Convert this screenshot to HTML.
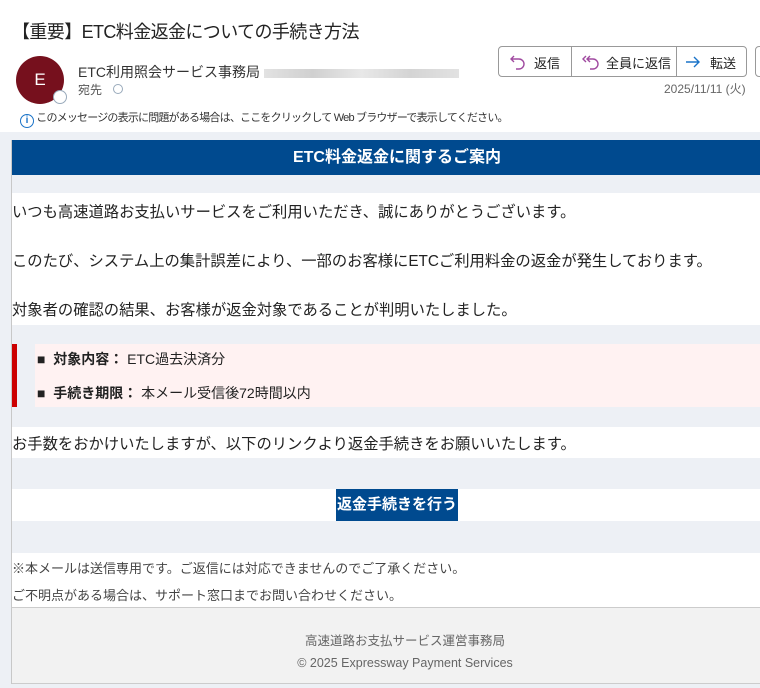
<!DOCTYPE html>
<html><head><meta charset="utf-8"><style>
*{margin:0;padding:0;box-sizing:border-box}
body{width:760px;height:688px;overflow:hidden;background:#fff;font-family:"Liberation Sans","Noto Sans CJK JP",sans-serif;color:#222;position:relative}
.a{position:absolute;white-space:nowrap}
.mail{position:absolute;left:0;top:132px;width:760px;height:556px;background:#edf0f5}
.c{position:absolute;left:11px;width:800px;border-left:1px solid #c8c8c8}
.row{position:absolute;left:12px;width:790px;background:#fff}
svg{position:absolute}
</style></head><body>
<div class="a" style="left:12px;top:18px;font-size:18px;letter-spacing:-0.6px;color:#222">【重要】ETC料金返金についての手続き方法</div>
<div class="a" style="left:16px;top:56px;width:48px;height:48px;border-radius:50%;background:#76101d;color:#fff;font-size:17px;text-align:center;line-height:48px">E</div>
<div class="a" style="left:53px;top:90px;width:14px;height:14px;border-radius:50%;background:#fff;border:1.5px solid #9ab"></div>
<div class="a" style="left:78px;top:62px;font-size:14px;color:#333">ETC利用照会サービス事務局 <span style="display:inline-block;width:195px;height:9px;background:linear-gradient(90deg,#e2e2e2,#d0d0d0,#e8e8e8,#d4d4d4,#e2e2e2);vertical-align:middle"></span></div>
<div class="a" style="left:78px;top:81px;font-size:12px;color:#555">宛先 <span style="display:inline-block;width:10px;height:10px;border:1px solid #9ab;border-radius:50%;margin-left:8px"></span></div>
<div class="a" style="left:20px;top:109px;font-size:11px;letter-spacing:-0.8px;color:#333"><span style="display:inline-block;width:14px;height:14px;border:1.5px solid #1a73c8;border-radius:50%;color:#1a73c8;font-size:10px;line-height:11px;text-align:center;font-weight:bold;vertical-align:-2px;letter-spacing:0">i</span> このメッセージの表示に問題がある場合は、ここをクリックして Web ブラウザーで表示してください。</div>
<div class="a" style="left:498px;top:46px;width:249px;height:31px;border:1px solid #999;border-radius:4px;font-size:13px;color:#222">
<svg style="left:10px;top:7px" width="18" height="16" viewBox="0 0 18 16" fill="none" stroke="#a04aa0" stroke-width="1.4"><path d="M5 2 L2 5 L5 8 M2 5 H10 A5 5 0 0 1 10 15 H7"/></svg>
<div class="a" style="left:35px;top:6px">返信</div>
<div class="a" style="left:72px;top:0;height:29px;border-left:1px solid #999"></div>
<svg style="left:82px;top:7px" width="20" height="16" viewBox="0 0 20 16" fill="none" stroke="#a04aa0" stroke-width="1.4"><path d="M5 2 L2 5 L5 8 M9 2 L6 5 L9 8 M6 5 H12 A5 5 0 0 1 12 15 H9"/></svg>
<div class="a" style="left:107px;top:6px">全員に返信</div>
<div class="a" style="left:177px;top:0;height:29px;border-left:1px solid #999"></div>
<svg style="left:185px;top:8px" width="18" height="14" viewBox="0 0 18 14" fill="none" stroke="#1a73c8" stroke-width="1.4"><path d="M2 7 H15 M10 2 L15 7 L10 12"/></svg>
<div class="a" style="left:211px;top:6px">転送</div>
</div>
<div class="a" style="left:755px;top:46px;width:20px;height:31px;border:1px solid #999;border-radius:4px"></div>
<div class="a" style="left:664px;top:80px;font-size:12px;color:#666">2025/11/11 (火)</div>

<div class="mail">
<div class="c" style="top:8px;height:544px"></div>
<div class="row" style="top:8px;height:35px;background:#004a8f;color:#fff;font-weight:bold;font-size:16px;text-align:center;line-height:35px;width:770px">ETC料金返金に関するご案内</div>
<div class="row" style="top:61px;height:132px;font-size:15.3px;color:#222">
<div class="a" style="left:0;top:7px">いつも高速道路お支払いサービスをご利用いただき、誠にありがとうございます。</div>
<div class="a" style="left:0;top:56px">このたび、システム上の集計誤差により、一部のお客様にETCご利用料金の返金が発生しております。</div>
<div class="a" style="left:0;top:105px">対象者の確認の結果、お客様が返金対象であることが判明いたしました。</div>
</div>
<div class="a" style="left:12px;top:212px;width:5px;height:63px;background:#c00"></div>
<div class="a" style="left:35px;top:212px;width:760px;height:63px;background:#fff2f2;font-size:14px;color:#222">
<div class="a" style="left:2px;top:5px">■&nbsp; <b>対象内容：</b> ETC過去決済分</div>
<div class="a" style="left:2px;top:39px">■&nbsp; <b>手続き期限：</b> 本メール受信後72時間以内</div>
</div>
<div class="row" style="top:295px;height:31px;font-size:15.3px"><div class="a" style="left:0;top:5px">お手数をおかけいたしますが、以下のリンクより返金手続きをお願いいたします。</div></div>
<div class="row" style="top:357px;height:32px"><div class="a" style="left:324px;top:0;width:122px;height:32px;background:#004a8f;color:#fff;font-weight:bold;font-size:15px;text-align:center;line-height:32px">返金手続きを行う</div></div>
<div class="row" style="top:421px;height:54px;font-size:13px;color:#444">
<div class="a" style="left:0;top:5px">※本メールは送信専用です。ご返信には対応できませんのでご了承ください。</div>
<div class="a" style="left:0;top:32px">ご不明点がある場合は、サポート窓口までお問い合わせください。</div>
</div>
<div class="row" style="top:475px;height:77px;background:#f2f2f2;border-top:1px solid #ccc;border-bottom:1px solid #ccc;font-size:12.5px;color:#666">
<div class="a" style="left:0;width:786px;text-align:center;top:22px">高速道路お支払サービス運営事務局</div>
<div class="a" style="left:0;width:786px;text-align:center;top:48px">© 2025 Expressway Payment Services</div>
</div>
</div>
</body></html>
